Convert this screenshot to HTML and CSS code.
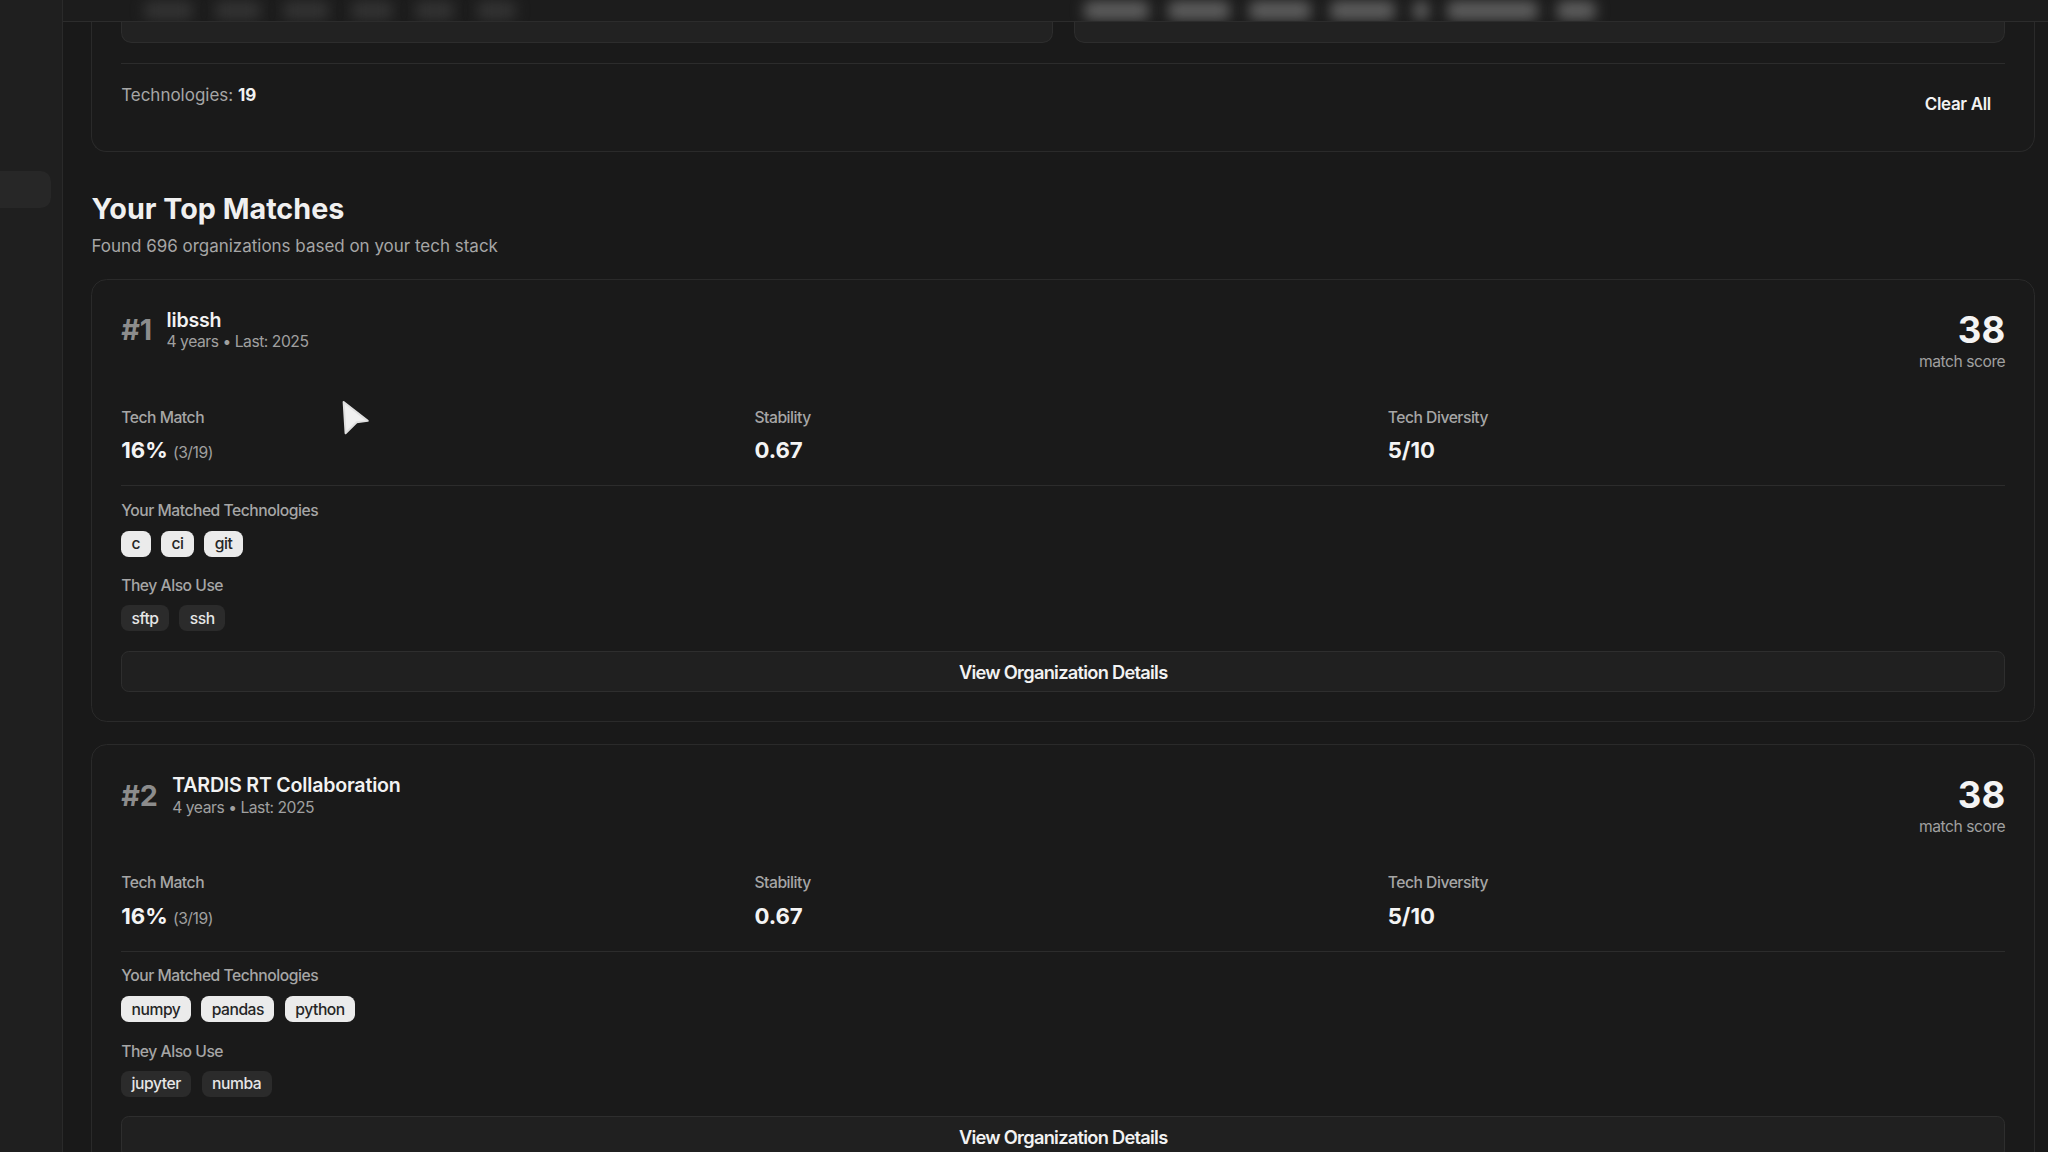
FILE: index.html
```html
<!DOCTYPE html>
<html lang="en">
<head>
<meta charset="utf-8">
<title>Your Top Matches</title>
<link rel="stylesheet" href="styles.css">
</head>
<body>
<div class="app">
  <aside class="sidebar">
    <div class="side-item"></div>
  </aside>
  <div class="main">
    <div class="topbar">
      <div class="blur-group faint">
        <span class="b b38"></span><span class="b b35"></span><span class="b b35"></span><span class="b b32"></span><span class="b b30"></span><span class="b b30"></span>
      </div>
      <div class="blur-group bright">
        <span class="b b50"></span><span class="b b48"></span><span class="b b48"></span><span class="b b50"></span><span class="b b12"></span><span class="b b70"></span><span class="b b30"></span>
      </div>
    </div>
    <div class="content">
      <section class="stack-card">
        <div class="inputs">
          <div class="input-box"></div>
          <div class="input-box"></div>
        </div>
        <div class="stack-footer">
          <div class="tech-count">Technologies: <strong>19</strong></div>
          <button class="clear-btn">Clear All</button>
        </div>
      </section>

      <div class="matches-head">
        <h2>Your Top Matches</h2>
        <p>Found 696 organizations based on your tech stack</p>
      </div>

      <article class="match-card">
        <div class="mc-head">
          <div class="mc-title">
            <span class="rank">#1</span>
            <div class="name-block">
              <div class="org-name">libssh</div>
              <div class="org-meta">4 years • Last: 2025</div>
            </div>
          </div>
          <div class="score">
            <div class="score-num">38</div>
            <div class="score-label">match score</div>
          </div>
        </div>
        <div class="stats">
          <div class="stat">
            <div class="stat-label">Tech Match</div>
            <div class="stat-value">16% <span class="stat-sub">(3/19)</span></div>
          </div>
          <div class="stat">
            <div class="stat-label">Stability</div>
            <div class="stat-value">0.67</div>
          </div>
          <div class="stat">
            <div class="stat-label">Tech Diversity</div>
            <div class="stat-value">5/10</div>
          </div>
        </div>
        <div class="tech-section">
          <div class="sec-label">Your Matched Technologies</div>
          <div class="tags">
            <span class="tag light">c</span><span class="tag light">ci</span><span class="tag light">git</span>
          </div>
          <div class="sec-label second">They Also Use</div>
          <div class="tags">
            <span class="tag dark">sftp</span><span class="tag dark">ssh</span>
          </div>
        </div>
        <button class="details-btn">View Organization Details</button>
      </article>

      <article class="match-card">
        <div class="mc-head">
          <div class="mc-title">
            <span class="rank">#2</span>
            <div class="name-block">
              <div class="org-name">TARDIS RT Collaboration</div>
              <div class="org-meta">4 years • Last: 2025</div>
            </div>
          </div>
          <div class="score">
            <div class="score-num">38</div>
            <div class="score-label">match score</div>
          </div>
        </div>
        <div class="stats">
          <div class="stat">
            <div class="stat-label">Tech Match</div>
            <div class="stat-value">16% <span class="stat-sub">(3/19)</span></div>
          </div>
          <div class="stat">
            <div class="stat-label">Stability</div>
            <div class="stat-value">0.67</div>
          </div>
          <div class="stat">
            <div class="stat-label">Tech Diversity</div>
            <div class="stat-value">5/10</div>
          </div>
        </div>
        <div class="tech-section">
          <div class="sec-label">Your Matched Technologies</div>
          <div class="tags">
            <span class="tag light">numpy</span><span class="tag light">pandas</span><span class="tag light">python</span>
          </div>
          <div class="sec-label second">They Also Use</div>
          <div class="tags">
            <span class="tag dark">jupyter</span><span class="tag dark">numba</span>
          </div>
        </div>
        <button class="details-btn">View Organization Details</button>
      </article>
    </div>
  </div>
  <svg class="cursor" width="24" height="28" viewBox="0 0 24 28" aria-hidden="true">
    <path d="M2 1.5 L20.5 16 L12 17 L3.5 25.5 Z" fill="#f0f0f0" stroke="#e0e0e0" stroke-width="1.5" stroke-linejoin="round"/>
  </svg>
</div>
</body>
</html>
```

FILE: styles.css
```css
html {
  zoom: 1.30612;
}
* {
  box-sizing: border-box;
}
body {
  margin: 0;
  background: #191919;
  font-family: "Inter", "Noto Sans", "Liberation Sans", sans-serif;
  color: #ededed;
  overflow: hidden;
}
.app {
  position: relative;
  display: flex;
  width: 1568px;
  height: 882px;
  overflow: hidden;
}
.sidebar {
  width: 48px;
  flex: none;
  background: #1f1f1f;
  border-right: 1px solid #2a2a2a;
  padding-top: 131px;
}
.side-item {
  width: 39px;
  height: 28px;
  background: #272727;
  border-radius: 0 8px 8px 0;
}
.main {
  flex: 1;
  display: flex;
  flex-direction: column;
  min-width: 0;
}
.topbar {
  height: 17px;
  flex: none;
  background: #1c1c1c;
  border-bottom: 1px solid #2c2c2c;
  display: flex;
  align-items: center;
  padding-left: 62px;
  overflow: hidden;
}
.blur-group {
  display: flex;
  gap: 17px;
  align-items: center;
}
.blur-group.bright {
  margin-left: 435px;
  gap: 14px;
}
.b {
  display: block;
  height: 14px;
  border-radius: 5px;
  filter: blur(5px);
}
.faint .b { background: #333333; }
.bright .b { background: #5e5e5e; }
.b12 { width: 12px; }
.b30 { width: 30px; }
.b32 { width: 32px; }
.b35 { width: 35px; }
.b38 { width: 38px; }
.b48 { width: 48px; }
.b50 { width: 50px; }
.b70 { width: 70px; }

.content {
  padding: 0 10px 0 22px;
}
.stack-card {
  border: 1px solid #2a2a2a;
  border-top: none;
  border-radius: 0 0 12px 12px;
  padding: 0 22px 21px;
  background: #1a1a1a;
}
.inputs {
  display: grid;
  grid-template-columns: 1fr 1fr;
  gap: 16px;
  margin-bottom: 15px;
}
.input-box {
  height: 16px;
  background: #222222;
  border: 1px solid #2d2d2d;
  border-top: none;
  border-radius: 0 0 8px 8px;
}
.stack-footer {
  border-top: 1px solid #2c2c2c;
  padding-top: 14px;
  display: flex;
  justify-content: space-between;
  align-items: flex-start;
}
.tech-count {
  font-size: 13px;
  line-height: 20px;
  color: #a6a6a6;
}
.tech-count strong {
  color: #f2f2f2;
  font-weight: 700;
}
.clear-btn {
  height: 30px;
  margin-top: 2px;
  padding: 0 11px;
  background: transparent;
  border: none;
  color: #f2f2f2;
  font-family: inherit;
  font-size: 13px;
  font-weight: 600;
  letter-spacing: -0.02em;
  line-height: 20px;
}

.matches-head {
  margin-top: 30px;
  margin-bottom: 15px;
}
.matches-head h2 {
  margin: 0;
  font-size: 22px;
  line-height: 28px;
  font-weight: 700;
  color: #f0f0f0;
}
.matches-head p {
  margin: 4px 0 0;
  font-size: 13px;
  line-height: 20px;
  color: #a6a6a6;
}

.match-card {
  border: 1px solid #2a2a2a;
  border-radius: 12px;
  padding: 22px;
  margin-bottom: 17px;
  background: #1a1a1a;
}
.mc-head {
  display: flex;
  justify-content: space-between;
  align-items: flex-start;
}
.mc-title {
  display: flex;
  align-items: center;
  gap: 11px;
}
.rank {
  font-size: 22px;
  line-height: 28px;
  font-weight: 700;
  color: #8c8c8c;
}
.org-name {
  font-size: 15px;
  line-height: 18px;
  font-weight: 600;
  letter-spacing: -0.01em;
  color: #f2f2f2;
}
.org-meta {
  font-size: 12px;
  line-height: 16px;
  letter-spacing: -0.03em;
  color: #a0a0a0;
}
.score {
  text-align: right;
  padding-top: 1px;
}
.score-num {
  font-size: 28px;
  line-height: 32px;
  font-weight: 700;
  color: #f4f4f4;
}
.score-label {
  font-size: 12px;
  line-height: 16px;
  letter-spacing: -0.03em;
  color: #a0a0a0;
}
.stats {
  display: grid;
  grid-template-columns: 1fr 1fr 1fr;
  gap: 12px;
  margin-top: 27px;
  padding-bottom: 13px;
  border-bottom: 1px solid #2c2c2c;
}
.stat-label {
  font-size: 12px;
  line-height: 16px;
  font-weight: 500;
  letter-spacing: -0.03em;
  color: #a6a6a6;
}
.stat-value {
  margin-top: 4px;
  font-size: 17px;
  line-height: 24px;
  font-weight: 700;
  color: #f4f4f4;
}
.stat-sub {
  font-size: 12px;
  font-weight: 400;
  letter-spacing: -0.03em;
  color: #a0a0a0;
}
.tech-section {
  padding-top: 11px;
}
.sec-label {
  font-size: 12px;
  line-height: 16px;
  font-weight: 500;
  letter-spacing: -0.03em;
  color: #a6a6a6;
}
.sec-label.second {
  margin-top: 15px;
}
.tags {
  display: flex;
  gap: 8px;
  margin-top: 7px;
}
.sec-label.second + .tags {
  margin-top: 6px;
}
.tag {
  display: inline-flex;
  align-items: center;
  height: 20px;
  padding: 0 8px;
  border-radius: 6px;
  font-size: 12px;
  font-weight: 500;
  letter-spacing: -0.03em;
}
.tag.light {
  background: #ebebeb;
  color: #262626;
}
.tag.dark {
  background: #2b2b2b;
  color: #e6e6e6;
}
.details-btn {
  display: block;
  width: 100%;
  height: 32px;
  margin-top: 15px;
  background: #202020;
  border: 1px solid #2e2e2e;
  border-radius: 6px;
  color: #f2f2f2;
  font-family: inherit;
  font-size: 14px;
  font-weight: 600;
  letter-spacing: -0.04em;
}
.cursor {
  position: absolute;
  left: 261px;
  top: 306px;
}
```
